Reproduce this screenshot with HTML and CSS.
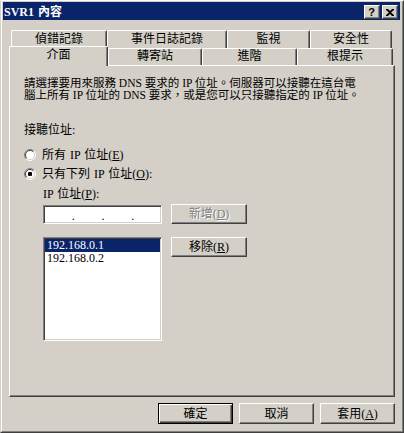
FILE: index.html
```html
<!DOCTYPE html>
<html lang="zh-Hant">
<head>
<meta charset="utf-8">
<title>SVR1 內容</title>
<link rel="stylesheet" href="styles.css">
</head>
<body>
<div class="window">
  <div class="frame">
    <div class="titlebar">
      <span class="title">SVR1 內容</span>
      <div class="tb-btns">
        <span class="tb-btn help">?</span>
        <span class="tb-btn close"><svg width="8" height="7" viewBox="0 0 8 7"><path d="M0 0h2l2 2 2-2h2v1L5 3.5 8 6v1H6L4 5 2 7H0V6l3-2.5L0 1z" fill="#000"/></svg></span>
      </div>
    </div>
    <div class="tabs">
      <div class="tabrow row1">
        <div class="tab t1">偵錯記錄</div>
        <div class="tab t2">事件日誌記錄</div>
        <div class="tab t3">監視</div>
        <div class="tab t4">安全性</div>
      </div>
      <div class="tabrow row2">
        <div class="tab sel t5">介面</div>
        <div class="tab t6">轉寄站</div>
        <div class="tab t7">進階</div>
        <div class="tab t8">根提示</div>
      </div>
    </div>
    <div class="panel">
      <p class="desc"><span class="line">請選擇要用來服務 DNS 要求的 IP 位址。伺服器可以接聽在這台電</span><span class="line">腦上所有 IP 位址的 DNS 要求，或是您可以只接聽指定的 IP 位址。</span></p>
      <div class="label">接聽位址:</div>
      <div class="radios">
        <div class="radio">
          <svg class="rb" width="12" height="12" viewBox="0 0 12 12"><circle cx="6" cy="6" r="5" fill="#fff"/><path d="M2.1 9.9A5.5 5.5 0 0 1 9.9 2.1" fill="none" stroke="#808080"/><path d="M9.9 2.1A5.5 5.5 0 0 1 2.1 9.9" fill="none" stroke="#fff"/><path d="M2.8 9.2A4.5 4.5 0 0 1 9.2 2.8" fill="none" stroke="#404040"/><path d="M9.2 2.8A4.5 4.5 0 0 1 2.8 9.2" fill="none" stroke="#d4d0c8"/></svg>
          <span>所有 IP 位址(<u>E</u>)</span>
        </div>
        <div class="radio">
          <svg class="rb" width="12" height="12" viewBox="0 0 12 12"><circle cx="6" cy="6" r="5" fill="#fff"/><path d="M2.1 9.9A5.5 5.5 0 0 1 9.9 2.1" fill="none" stroke="#808080"/><path d="M9.9 2.1A5.5 5.5 0 0 1 2.1 9.9" fill="none" stroke="#fff"/><path d="M2.8 9.2A4.5 4.5 0 0 1 9.2 2.8" fill="none" stroke="#404040"/><path d="M9.2 2.8A4.5 4.5 0 0 1 2.8 9.2" fill="none" stroke="#d4d0c8"/><rect x="4" y="4" width="4" height="4" rx="1" fill="#000"/></svg>
          <span>只有下列 IP 位址(<u>O</u>):</span>
        </div>
      </div>
      <div class="ipsec">
        <div class="iplabel">IP 位址(<u>P</u>):</div>
        <div class="iprow">
          <div class="ipbox"><span class="seg"></span><span class="dot">.</span><span class="seg"></span><span class="dot">.</span><span class="seg"></span><span class="dot">.</span><span class="seg"></span></div>
          <button class="btn side disabled" type="button">新增(<u>D</u>)</button>
        </div>
        <div class="listrow">
          <div class="listbox">
            <div class="item selected">192.168.0.1</div>
            <div class="item">192.168.0.2</div>
          </div>
          <button class="btn side" type="button">移除(<u>R</u>)</button>
        </div>
      </div>
    </div>
    <div class="dlg-buttons">
      <button class="btn default" type="button">確定</button>
      <button class="btn" type="button">取消</button>
      <button class="btn" type="button">套用(<u>A</u>)</button>
    </div>
  </div>
</div>
</body>
</html>
```
FILE: styles.css
```css
html, body {
  margin: 0;
  padding: 0;
  background: #d4d0c8;
}
body {
  font-family: "Liberation Serif", "Noto Sans CJK TC", serif;
  font-size: 12px;
  line-height: 12px;
  word-spacing: 1px;
  color: #000;
}
.window {
  width: 404px;
  height: 433px;
  box-sizing: border-box;
  border: 1px solid;
  border-color: #fff #404040 #404040 #d4d0c8;
}
.frame {
  height: 100%;
  box-sizing: border-box;
  border: 1px solid;
  border-color: #d4d0c8 #808080 #808080 #fff;
  padding: 0 2px 0 1px;
  display: flex;
  flex-direction: column;
}
.titlebar {
  height: 18px;
  flex: none;
  background: #0a246a;
  color: #fff;
  display: flex;
  justify-content: space-between;
  align-items: flex-start;
}
.title {
  font-weight: bold;
  padding: 4px 0 0 1px;
}
.tb-btns {
  display: flex;
  gap: 2px;
  padding: 3px 2px 0 0;
}
.tb-btn {
  width: 16px;
  height: 14px;
  box-sizing: border-box;
  background: #d4d0c8;
  border: 1px solid;
  border-color: #fff #404040 #404040 #fff;
  box-shadow: inset -1px -1px #808080;
  display: flex;
  align-items: center;
  justify-content: center;
  color: #000;
}
.help {
  font-family: "Liberation Sans", sans-serif;
  font-weight: bold;
  font-size: 11px;
  line-height: 11px;
  padding-right: 1px;
}
.close svg {
  display: block;
  margin-right: 1px;
}
.tabs {
  margin-top: 10px;
  flex: none;
}
.tabrow {
  display: flex;
  align-items: flex-start;
}
.row1 {
  height: 18px;
  padding-left: 8px;
}
.row2 {
  height: 17px;
  padding-left: 6px;
}
.tab {
  box-sizing: border-box;
  height: 100%;
  border-top: 1px solid #fff;
  border-left: 1px solid #fff;
  border-right: 1px solid #404040;
  box-shadow: inset -1px 0 #808080;
  border-radius: 2px 2px 0 0;
  text-align: center;
  background: #d4d0c8;
  white-space: nowrap;
}
.row1 .tab { padding-top: 2px; }
.row2 .tab { padding-top: 1px; }
.row2 .tab.sel {
  position: relative;
  z-index: 1;
  height: 20px;
  margin-top: -2px;
  padding-top: 2px;
}
.t1 { width: 96px; }
.t2 { width: 120px; }
.t3 { width: 83px; }
.t4 { width: 82px; }
.t5 { width: 99px; }
.t6 { width: 94px; }
.t7 { width: 95px; }
.t8 { width: 96px; }
.panel {
  height: 332px;
  flex: none;
  box-sizing: border-box;
  margin: 0 5px 0 6px;
  border: 1px solid;
  border-color: #fff #404040 #404040 #fff;
  box-shadow: inset -1px -1px #808080;
  padding: 11px 0 0 14px;
}
.desc {
  margin: 0;
  white-space: nowrap;
  word-spacing: 0;
}
.desc .line {
  display: block;
  height: 12px;
  line-height: 12px;
  font-size: 11.5px;
}
.label {
  margin-top: 23px;
}
.radios {
  margin-top: 9px;
}
.radio {
  height: 19px;
  display: flex;
  align-items: center;
  gap: 6px;
  white-space: nowrap;
}
.rb {
  display: block;
  flex: none;
}
.ipsec {
  margin-left: 19px;
}
.iplabel {
  margin-top: 5px;
}
.iprow, .listrow {
  display: flex;
  align-items: flex-start;
  gap: 9px;
}
.iprow {
  margin-top: 5px;
}
.listrow {
  margin-top: 13px;
}
.ipbox {
  width: 119px;
  height: 19px;
  box-sizing: border-box;
  background: #fff;
  border: 1px solid;
  border-color: #808080 #fff #fff #808080;
  box-shadow: inset 1px 1px #404040, inset -1px -1px #d4d0c8;
  display: flex;
  align-items: center;
  padding-left: 1px;
}
.seg {
  width: 27px;
}
.dot {
  width: 3px;
  padding-top: 2px;
}
.listbox {
  width: 119px;
  height: 104px;
  box-sizing: border-box;
  background: #fff;
  border: 1px solid;
  border-color: #808080 #fff #fff #808080;
  box-shadow: inset 1px 1px #404040, inset -1px -1px #d4d0c8;
  padding: 1px;
}
.item {
  height: 13px;
  line-height: 13px;
  padding-left: 2px;
  word-spacing: 0;
}
.item.selected {
  background: #0a246a;
  color: #fff;
}
.btn {
  width: 75px;
  height: 21px;
  box-sizing: border-box;
  background: #d4d0c8;
  border: 1px solid;
  border-color: #fff #404040 #404040 #fff;
  box-shadow: inset -1px -1px #808080;
  font: inherit;
  word-spacing: 0;
  color: #000;
  padding: 0;
  margin: 0;
  text-align: center;
}
.btn.side {
  width: 76px;
  height: 20px;
}
.iprow .btn.side {
  margin-top: -1px;
}
.btn.disabled {
  color: #808080;
  text-shadow: 1px 1px #fff;
}
.btn.default {
  border-color: #000;
  box-shadow: inset 1px 1px #fff, inset -1px -1px #404040, inset -2px -2px #808080;
}
.dlg-buttons {
  display: flex;
  justify-content: flex-end;
  gap: 6px;
  margin: 6px 5px 0 0;
}
u {
  text-decoration: underline;
  text-underline-offset: 1px;
}
```
